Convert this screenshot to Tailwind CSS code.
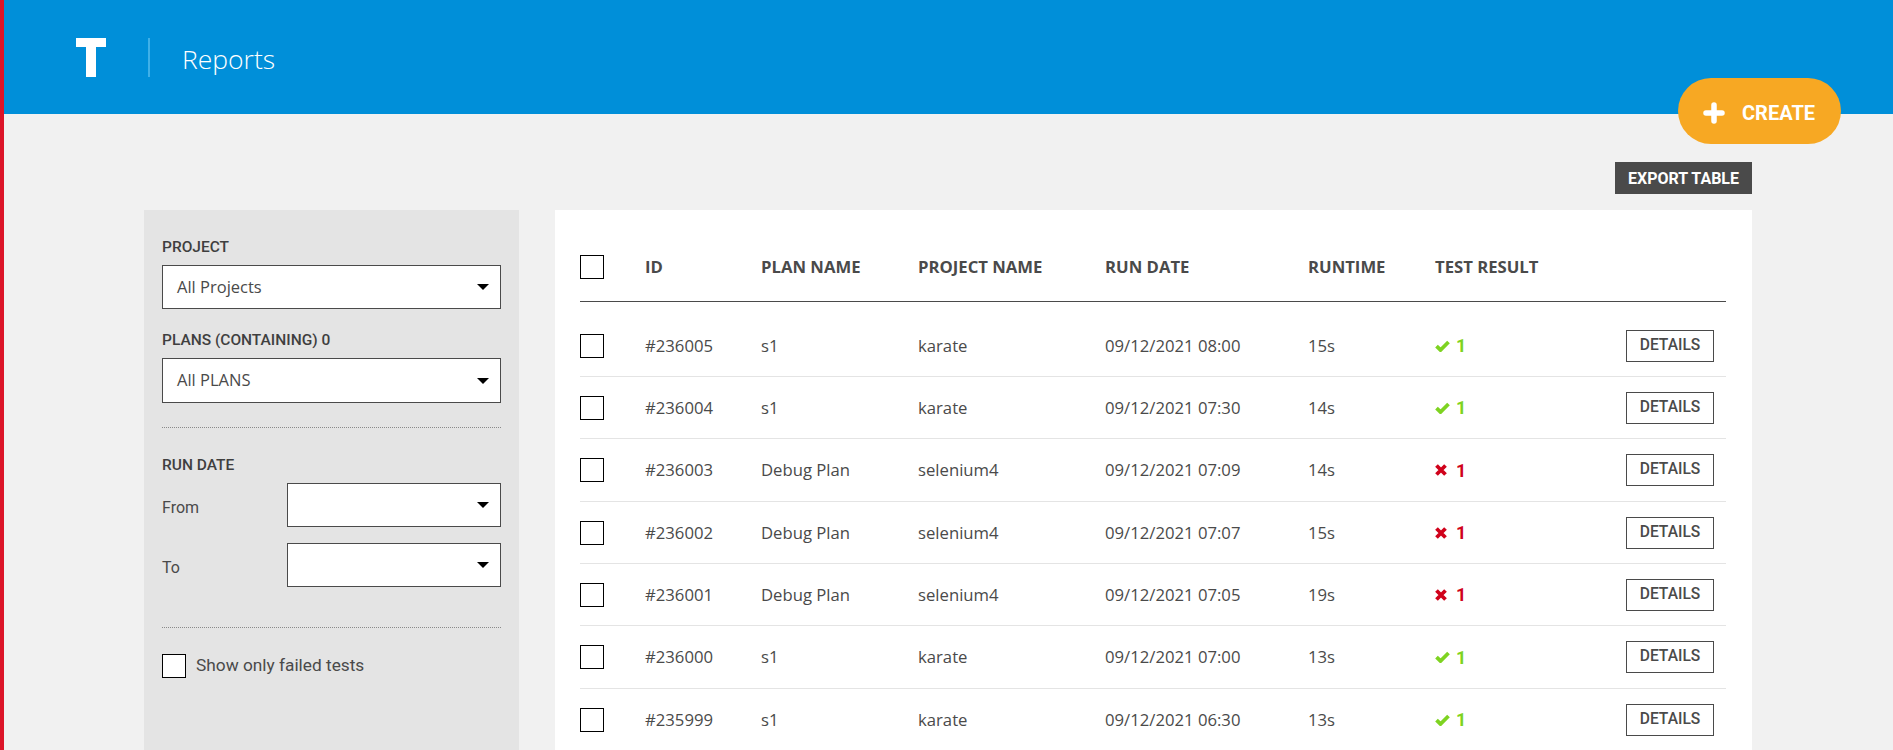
<!DOCTYPE html>
<html lang="en">
<head>
<meta charset="utf-8">
<title>Reports</title>
<script src="https://cdn.jsdelivr.net/npm/@tailwindcss/browser@4"></script>
</head>
<body class="font-['Open_Sans',sans-serif] text-[#4a4a4a]">
<div class="relative h-[750px] overflow-hidden border-l-4 border-[#dc1428] bg-[#f1f1f1]">
  <header class="flex h-[114px] items-center bg-[#008fd9] pl-[72px]">
    <svg class="h-[39px] w-[30px]" viewBox="0 0 30 39"><path fill="#fff" d="M0 0H30V9H20V39H10V9H0Z"/></svg>
    <div class="ml-[42px] h-[39px] w-[2px] bg-[#3fb0e8]"></div>
    <h1 class="ml-[32px] mt-[4px] font-light text-[26.5px] leading-none text-white">Reports</h1>
  </header>

  <button class="absolute left-[1674px] top-[78px] flex h-[66px] w-[163px] items-center rounded-full bg-[#f7a823] pl-[25px] pt-[3px] font-['Roboto',sans-serif] text-[20px] font-bold text-white">
    <svg class="h-[22px] w-[22px]" viewBox="0 0 22 22"><path d="M11 3V19M3 11H19" stroke="#fff" stroke-width="5.5" stroke-linecap="round"/></svg>
    <span class="ml-[17px]">CREATE</span>
  </button>

  <div class="ml-[140px] flex items-start gap-[36px]">
    <aside class="mt-[96px] h-[560px] w-[375px] shrink-0 bg-[#e4e4e4] px-[18px] pt-[28px] font-['Roboto',sans-serif]">
      <div class="text-[15.5px] font-medium leading-[18px] text-[#3f3f3f]">PROJECT</div>
      <div class="mt-[9px] flex h-[44px] items-center justify-between border border-[#4a4a4a] bg-white pl-[14px] pr-[11px] font-['Open_Sans',sans-serif] text-[16.5px]">
        <span>All Projects</span><span class="h-0 w-0 border-x-[6px] border-t-[6px] border-x-transparent border-t-black"></span>
      </div>
      <div class="mt-[22px] text-[15.5px] font-medium leading-[18px] text-[#3f3f3f]">PLANS (CONTAINING) 0</div>
      <div class="mt-[9px] flex h-[45px] items-center justify-between border border-[#4a4a4a] bg-white pl-[14px] pr-[11px] font-['Open_Sans',sans-serif] text-[16.5px]">
        <span>All PLANS</span><span class="h-0 w-0 border-x-[6px] border-t-[6px] border-x-transparent border-t-black"></span>
      </div>
      <div class="mt-[24px] border-t border-dotted border-[#8a8a8a]"></div>
      <div class="mt-[28px] text-[15.5px] font-medium leading-[18px] text-[#3f3f3f]">RUN DATE</div>
      <div class="mt-[9px] flex items-center justify-between text-[16px]">
        <span class="mt-[5px]">From</span>
        <div class="flex h-[44px] w-[214px] items-center justify-end border border-[#4a4a4a] bg-white pr-[11px]"><span class="h-0 w-0 border-x-[6px] border-t-[6px] border-x-transparent border-t-black"></span></div>
      </div>
      <div class="mt-[16px] flex items-center justify-between text-[16px]">
        <span class="mt-[5px]">To</span>
        <div class="flex h-[44px] w-[214px] items-center justify-end border border-[#4a4a4a] bg-white pr-[11px]"><span class="h-0 w-0 border-x-[6px] border-t-[6px] border-x-transparent border-t-black"></span></div>
      </div>
      <div class="mt-[40px] border-t border-dotted border-[#8a8a8a]"></div>
      <label class="mt-[25px] flex items-center gap-[10px] text-[17.3px]">
        <span class="h-[24px] w-[24px] border border-black bg-white"></span>
        <span>Show only failed tests</span>
      </label>
    </aside>

    <main class="w-[1197px] shrink-0 pt-[48px]">
      <div class="flex justify-end">
        <button class="h-[32px] w-[137px] bg-[#4a4a4a] pt-[1px] font-['Roboto',sans-serif] text-[16px] font-bold text-white">EXPORT TABLE</button>
      </div>
      <div class="mt-[16px] bg-white pl-[25px] pr-[26px] pb-[40px]">
        <div class="grid h-[92px] grid-cols-[65px_116px_157px_187px_203px_127px_1fr] items-center border-b border-[#4a4a4a] pt-[22px] text-[16.7px] font-bold">
          <span class="h-[24px] w-[24px] border border-black"></span>
          <span>ID</span><span>PLAN NAME</span><span>PROJECT NAME</span><span>RUN DATE</span><span>RUNTIME</span><span>TEST RESULT</span>
        </div>
        <div class="mt-[13px] text-[16.7px]">
          <div class="grid h-[62px] grid-cols-[65px_116px_157px_187px_203px_127px_1fr] items-center border-b border-[#e4e4e4]">
            <span class="h-[24px] w-[24px] border border-black"></span><span>#236005</span><span>s1</span><span>karate</span><span>09/12/2021 08:00</span><span>15s</span>
            <div class="flex items-center justify-between pr-[12px]"><span class="flex items-center gap-[6px] font-['Roboto',sans-serif] text-[18px] font-bold text-[#7ed321]"><svg class="h-[12px] w-[15px]" viewBox="0 0 15 12"><path d="M1.5 6.2L5.5 10L13.5 2" fill="none" stroke="#7ed321" stroke-width="3.8"/></svg>1</span><button class="h-[32px] w-[88px] border border-[#4a4a4a] font-['Roboto',sans-serif] text-[15.6px] font-medium">DETAILS</button></div>
          </div>
          <div class="grid h-[62px] grid-cols-[65px_116px_157px_187px_203px_127px_1fr] items-center border-b border-[#e4e4e4]">
            <span class="h-[24px] w-[24px] border border-black"></span><span>#236004</span><span>s1</span><span>karate</span><span>09/12/2021 07:30</span><span>14s</span>
            <div class="flex items-center justify-between pr-[12px]"><span class="flex items-center gap-[6px] font-['Roboto',sans-serif] text-[18px] font-bold text-[#7ed321]"><svg class="h-[12px] w-[15px]" viewBox="0 0 15 12"><path d="M1.5 6.2L5.5 10L13.5 2" fill="none" stroke="#7ed321" stroke-width="3.8"/></svg>1</span><button class="h-[32px] w-[88px] border border-[#4a4a4a] font-['Roboto',sans-serif] text-[15.6px] font-medium">DETAILS</button></div>
          </div>
          <div class="grid h-[63px] grid-cols-[65px_116px_157px_187px_203px_127px_1fr] items-center border-b border-[#e4e4e4]">
            <span class="h-[24px] w-[24px] border border-black"></span><span>#236003</span><span>Debug Plan</span><span>selenium4</span><span>09/12/2021 07:09</span><span>14s</span>
            <div class="flex items-center justify-between pr-[12px]"><span class="flex items-center gap-[9px] font-['Roboto',sans-serif] text-[18px] font-bold text-[#d0021b]"><svg class="h-[12px] w-[12px]" viewBox="0 0 12 12"><path d="M1.5 1.5L10.5 10.5M10.5 1.5L1.5 10.5" fill="none" stroke="#d0021b" stroke-width="3.8"/></svg>1</span><button class="h-[32px] w-[88px] border border-[#4a4a4a] font-['Roboto',sans-serif] text-[15.6px] font-medium">DETAILS</button></div>
          </div>
          <div class="grid h-[62px] grid-cols-[65px_116px_157px_187px_203px_127px_1fr] items-center border-b border-[#e4e4e4]">
            <span class="h-[24px] w-[24px] border border-black"></span><span>#236002</span><span>Debug Plan</span><span>selenium4</span><span>09/12/2021 07:07</span><span>15s</span>
            <div class="flex items-center justify-between pr-[12px]"><span class="flex items-center gap-[9px] font-['Roboto',sans-serif] text-[18px] font-bold text-[#d0021b]"><svg class="h-[12px] w-[12px]" viewBox="0 0 12 12"><path d="M1.5 1.5L10.5 10.5M10.5 1.5L1.5 10.5" fill="none" stroke="#d0021b" stroke-width="3.8"/></svg>1</span><button class="h-[32px] w-[88px] border border-[#4a4a4a] font-['Roboto',sans-serif] text-[15.6px] font-medium">DETAILS</button></div>
          </div>
          <div class="grid h-[62px] grid-cols-[65px_116px_157px_187px_203px_127px_1fr] items-center border-b border-[#e4e4e4]">
            <span class="h-[24px] w-[24px] border border-black"></span><span>#236001</span><span>Debug Plan</span><span>selenium4</span><span>09/12/2021 07:05</span><span>19s</span>
            <div class="flex items-center justify-between pr-[12px]"><span class="flex items-center gap-[9px] font-['Roboto',sans-serif] text-[18px] font-bold text-[#d0021b]"><svg class="h-[12px] w-[12px]" viewBox="0 0 12 12"><path d="M1.5 1.5L10.5 10.5M10.5 1.5L1.5 10.5" fill="none" stroke="#d0021b" stroke-width="3.8"/></svg>1</span><button class="h-[32px] w-[88px] border border-[#4a4a4a] font-['Roboto',sans-serif] text-[15.6px] font-medium">DETAILS</button></div>
          </div>
          <div class="grid h-[63px] grid-cols-[65px_116px_157px_187px_203px_127px_1fr] items-center border-b border-[#e4e4e4]">
            <span class="h-[24px] w-[24px] border border-black"></span><span>#236000</span><span>s1</span><span>karate</span><span>09/12/2021 07:00</span><span>13s</span>
            <div class="flex items-center justify-between pr-[12px]"><span class="flex items-center gap-[6px] font-['Roboto',sans-serif] text-[18px] font-bold text-[#7ed321]"><svg class="h-[12px] w-[15px]" viewBox="0 0 15 12"><path d="M1.5 6.2L5.5 10L13.5 2" fill="none" stroke="#7ed321" stroke-width="3.8"/></svg>1</span><button class="h-[32px] w-[88px] border border-[#4a4a4a] font-['Roboto',sans-serif] text-[15.6px] font-medium">DETAILS</button></div>
          </div>
          <div class="grid h-[62px] grid-cols-[65px_116px_157px_187px_203px_127px_1fr] items-center border-b border-[#e4e4e4]">
            <span class="h-[24px] w-[24px] border border-black"></span><span>#235999</span><span>s1</span><span>karate</span><span>09/12/2021 06:30</span><span>13s</span>
            <div class="flex items-center justify-between pr-[12px]"><span class="flex items-center gap-[6px] font-['Roboto',sans-serif] text-[18px] font-bold text-[#7ed321]"><svg class="h-[12px] w-[15px]" viewBox="0 0 15 12"><path d="M1.5 6.2L5.5 10L13.5 2" fill="none" stroke="#7ed321" stroke-width="3.8"/></svg>1</span><button class="h-[32px] w-[88px] border border-[#4a4a4a] font-['Roboto',sans-serif] text-[15.6px] font-medium">DETAILS</button></div>
          </div>
        </div>
      </div>
    </main>
  </div>
</div>
</body>
</html>
